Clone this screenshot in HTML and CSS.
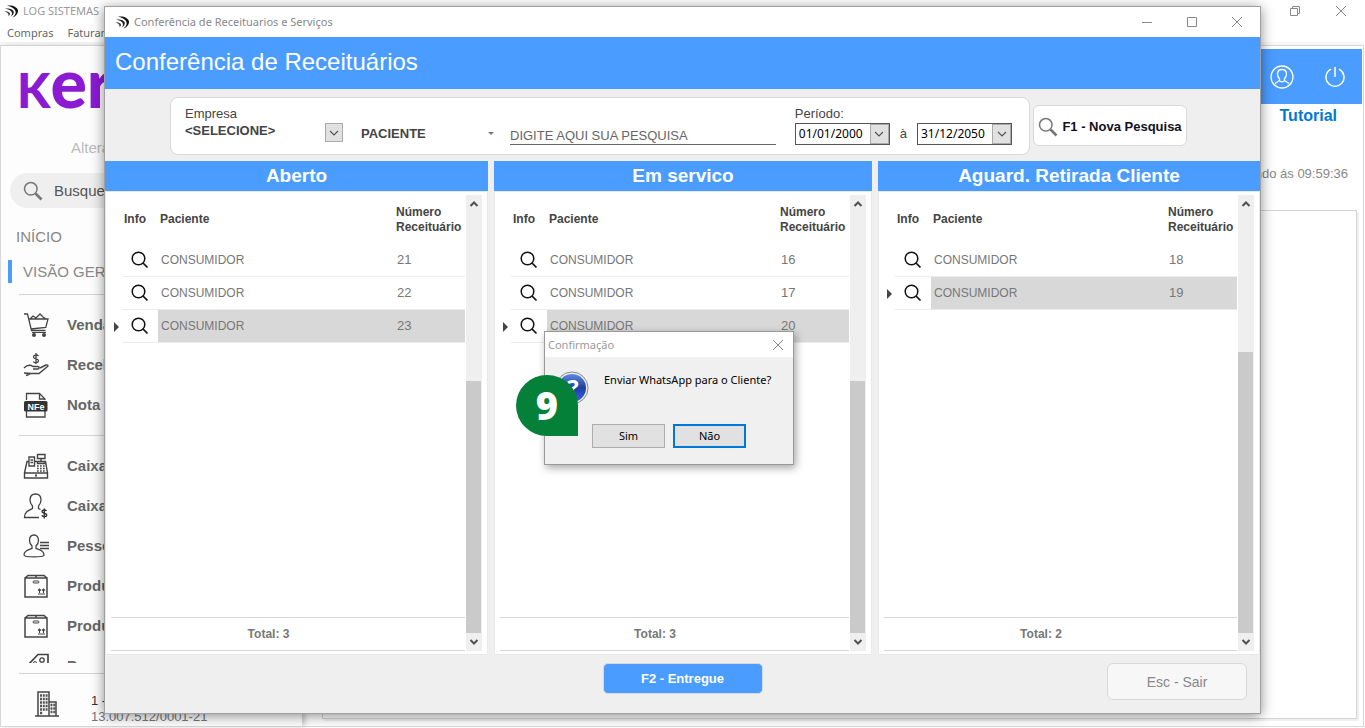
FILE: index.html
```html
<!DOCTYPE html>
<html lang="pt-BR">
<head>
<meta charset="utf-8">
<title>Conferência de Receituarios e Serviços</title>
<link rel="stylesheet" href="styles.css">
</head>
<body>
<svg class="defs" aria-hidden="true">
  <symbol id="app-mark" viewBox="0 0 15 13">
    <path d="M3 .8C8-.3 13.500 2 14 5.500c.2 3-2 5.500-5.500 7 2.500-2.200 3.600-4.200 3-6.200C10.700 3.500 7 1.300 3 .8z" fill="#111"/>
    <path d="M1 3.500C6 3 9.500 4.500 9.800 7c.1 1.800-1 3.300-3 4.500 1-1.500 1.400-2.600 1.100-3.800C7.400 5.600 4.500 4.200 1 3.500z" fill="#222"/>
    <path d="M.5 6.300c2.500 0 5 .6 5.500 2.300.2.9-.3 1.800-1.500 2.500.3-2-.9-3.800-4-4.800z" fill="#444"/>
  </symbol>
  <symbol id="lens" viewBox="0 0 18 18">
    <circle cx="7.500" cy="7.500" r="6.300" fill="none" stroke="#111" stroke-width="1.500"/>
    <path d="M12 12l4.500 4.500" stroke="#111" stroke-width="1.700"/>
  </symbol>
  <symbol id="search" viewBox="0 0 20 20">
    <circle cx="7.800" cy="7.800" r="6.300" fill="none" stroke="#777" stroke-width="1.500"/>
    <path d="M12.500 12.500l6 6" stroke="#777" stroke-width="2.600"/>
  </symbol>
  <symbol id="cross" viewBox="0 0 12 12">
    <path d="M1 1l10 10M11 1L1 11" stroke="#888" fill="none"/>
  </symbol>
  <symbol id="chevron" viewBox="0 0 10 10">
    <path d="M1 3l4 4 4-4" stroke="#555" fill="none" stroke-width="1.200"/>
  </symbol>
  <symbol id="scroll-up" viewBox="0 0 10 10">
    <path d="M1.500 7L5 3.500 8.500 7" stroke="#505050" fill="none" stroke-width="2"/>
  </symbol>
  <symbol id="scroll-down" viewBox="0 0 10 10">
    <path d="M1.500 3L5 6.500 8.500 3" stroke="#505050" fill="none" stroke-width="2"/>
  </symbol>
  <symbol id="box" viewBox="0 0 26 26">
    <path d="M2 5h22v19H2zM2 5l3-2.500h16L24 5M13 2.500V5" fill="none" stroke="#444" stroke-width="1.500"/>
    <rect x="10" y="8" width="6" height="2" rx="1" fill="none" stroke="#444"/>
    <path d="M15 21h7M16.500 20v-4M20.500 20v-4M15 17.500l1.500-1.500 1.500 1.500M19 17.500l1.500-1.500 1.500 1.500" fill="none" stroke="#444" stroke-width="1.100"/>
  </symbol>
</svg>

<div class="app">
  <header class="app-title">
    <svg class="mark"><use href="#app-mark"/></svg>
    <span>LOG SISTEMAS</span>
    <span class="app-controls">
      <button class="plain" aria-label="Restaurar"><svg width="12" height="12" viewBox="0 0 12 12"><path d="M1.500 3.500h7v7h-7zM3.500 3.500v-2h7v7h-2" fill="none" stroke="#888"/></svg></button>
      <button class="plain" aria-label="Fechar"><svg width="12" height="12"><use href="#cross"/></svg></button>
    </span>
  </header>
  <nav class="app-menu"><span>Compras</span><span>Faturamento</span></nav>
  <div class="app-body">
    <aside class="sidebar">
      <div class="logo"><span class="logo-k">K</span>er</div>
      <div class="change">Alterar</div>
      <div class="side-search"><svg width="20" height="20"><use href="#search"/></svg><span>Busque</span></div>
      <div class="side-head">INÍCIO</div>
      <div class="side-current">VISÃO GERAL</div>
      <ul class="side-list">
        <li><svg viewBox="0 0 26 26"><path d="M1 2h3.500l4 16.500h14M5.500 7H25l-2.200 8.500-15 1.500M7 7l3-3 3 2 4-4 3 3 3 2" fill="none" stroke="#444" stroke-width="1.300"/><circle cx="11" cy="23" r="2" fill="#444"/><circle cx="21" cy="23" r="2" fill="#444"/><path d="M9 20.500h14" stroke="#444"/></svg>Vendas</li>
        <li><svg viewBox="0 0 26 26"><path d="M1 16c3-3 6-3.500 9-1.500h5c1.500 0 1.500 2.500 0 2.500h-5M17 16l6-3c1.500-.5 2.500.5 1.500 1.500L16 21.500H8l-7-.500M3 23.500l4-1.500" fill="none" stroke="#444" stroke-width="1.400"/><path d="M15.500 4C14 2.400 10.500 2.800 10.500 5c0 2.600 5 1.200 5 3.800 0 2.200-3.800 2.600-5.300.8M13 1v11" fill="none" stroke="#444" stroke-width="1.300"/></svg>Receber</li>
        <li><svg viewBox="0 0 26 26"><path d="M3.500 8V1.500h13L22 7v1M16.500 1.500V7H22M3.500 19v6H22v-6" fill="none" stroke="#444" stroke-width="1.300"/><rect x="1" y="9" width="23.500" height="10.500" rx="1.500" fill="#333"/><text x="13" y="17.500" class="nfe">NFe</text></svg>Nota</li>
      </ul>
      <ul class="side-list side-list-more">
        <li><svg viewBox="0 0 26 26"><path d="M1.500 20L4 8.500h2M11.500 8.500h3M21 8.500h1.500L24.500 20M1.500 20h23v5h-23zM6 13V4h5.500v9zM7.500 7h2.500M7.500 9.500h2.500M14.500 1.500H22v4h-7.500zM18 5.500v3M14.500 8.500H22v2h-7.500z" fill="none" stroke="#444" stroke-width="1.400"/><path d="M14 13h8M14 15.500h8M14 18h8" stroke="#444" stroke-width="1.500" stroke-dasharray="1.700 1.300"/><path d="M12 22.500h2" stroke="#444" stroke-width="2"/></svg>Caixa</li>
        <li><svg viewBox="0 0 26 26"><path d="M12.500 1C9 1 7 3.500 7 7c0 2.500 1 4.500 2.500 6v2.500C5 17.500 1.500 19 1.500 24.500H16M12.500 1C16 1 18 3.500 18 7c0 2.500-1 4.500-2.500 6v2.500l2 1" fill="none" stroke="#444" stroke-width="1.300"/><path d="M23.500 18c-1-1.600-4.500-1.300-4.500.6 0 2.200 4.800 1 4.800 3.400 0 2-3.800 2.200-5 .4M21.300 15.500V25.500" fill="none" stroke="#333" stroke-width="1.400"/></svg>Caixa</li>
        <li><svg viewBox="0 0 26 26"><path d="M11 2C8 2 6.500 4.500 6.500 7.500c0 2.500 1 4 2.500 5.500v2.500C4.500 17 1 18 1 22c0 2.500 20 2.500 20 0 0-4-3.500-5-8-6.500V13c1.500-1.500 2.500-3 2.500-5.500C15.500 4.500 14 2 11 2z" fill="none" stroke="#444" stroke-width="1.300"/><path d="M17 9.500h9M17 12.500h9M17 15.500h9" stroke="#444" stroke-width="1.400"/></svg>Pessoas</li>
        <li><svg><use href="#box"/></svg>Produtos</li>
        <li><svg><use href="#box"/></svg>Produtos</li>
        <li><svg viewBox="0 0 26 26"><path d="M4 13L15 1.500h10V13L14 25z" fill="none" stroke="#444" stroke-width="1.700"/><circle cx="19" cy="7" r="2.200" fill="none" stroke="#444" stroke-width="1.300"/><circle cx="12" cy="10" r="1.500" fill="none" stroke="#444"/></svg>Promoções</li>
      </ul>
      <div class="company">
        <svg viewBox="0 0 26 26"><path d="M1 25h24M4 25V1h11v24M15 11h7v14" fill="none" stroke="#444" stroke-width="1.500"/><path d="M6 4.500h8M6 8h8M6 11.500h8M6 15h8M6 18.500h8M6 22h3M16.500 14h5M16.500 17.500h5M16.500 21h5" stroke="#555" stroke-width="2.500" stroke-dasharray="2 .8"/></svg>
        <div><span class="company-name">1 - LOG</span><span>13.007.512/0001-21</span></div>
      </div>
    </aside>
    <main class="app-main">
      <div class="top-bar">
        <svg width="24" height="24" viewBox="0 0 24 24"><g fill="none" stroke="#fff" stroke-width="1.300"><circle cx="12" cy="12" r="11"/><path d="M12 4.500c-3 0-4.500 2-4.500 4.500 0 2 .8 3.500 2 4.800v1.700L5 18.500M12 4.500c3 0 4.500 2 4.500 4.500 0 2-.8 3.500-2 4.800v1.700l4.500 3M9.500 15.500c1 1.700 4 1.700 5 0"/></g></svg>
        <svg width="20" height="20" viewBox="0 0 20 20"><path d="M6 2.200a9 9 0 1 0 8 0M10 0v10" fill="none" stroke="#fff" stroke-width="1.500"/></svg>
      </div>
      <a class="tutorial" href="#">Tutorial</a>
      <div class="updated">Atualizando ás 09:59:36</div>
      <div class="board"></div>
    </main>
  </div>
</div>

<section class="window" aria-label="Conferência de Receituários">
  <header class="window-title">
    <svg class="mark"><use href="#app-mark"/></svg>
    <span>Conferência de Receituarios e Serviços</span>
    <span class="window-controls">
      <button class="plain" aria-label="Minimizar"><svg width="12" height="12"><path d="M1 6.500h10" stroke="#888"/></svg></button>
      <button class="plain" aria-label="Maximizar"><svg width="12" height="12"><path d="M1.500 1.500h9v9h-9z" fill="none" stroke="#888"/></svg></button>
      <button class="plain" aria-label="Fechar"><svg width="12" height="12"><use href="#cross"/></svg></button>
    </span>
  </header>
  <h1 class="banner">Conferência de Receituários</h1>

  <form class="filters">
    <div class="filter-card">
      <div class="company-field">
        <label for="empresa">Empresa</label>
        <div class="company-pick">
          <select id="empresa"><option>&lt;SELECIONE&gt;</option></select>
          <span class="drop"><svg width="10" height="10"><use href="#chevron"/></svg></span>
        </div>
      </div>
      <div class="kind-pick">
        <select aria-label="Pesquisar por"><option>PACIENTE</option></select>
        <svg width="6" height="4"><path d="M0 0h6L3 3z" fill="#777"/></svg>
      </div>
      <input class="query" type="text" aria-label="Pesquisa" placeholder="DIGITE AQUI SUA PESQUISA">
      <div class="period">
        <label for="inicio">Período:</label>
        <div class="dates">
          <div class="date"><input id="inicio" type="text" value="01/01/2000"><button type="button" aria-label="Abrir calendário inicial"><svg width="10" height="10"><use href="#chevron"/></svg></button></div>
          <label for="fim">à</label>
          <div class="date"><input id="fim" type="text" value="31/12/2050"><button type="button" aria-label="Abrir calendário final"><svg width="10" height="10"><use href="#chevron"/></svg></button></div>
        </div>
      </div>
    </div>
    <button class="new-search" type="button"><svg width="20" height="20"><use href="#search"/></svg>F1 - Nova Pesquisa</button>
  </form>

  <div class="columns">
    <section class="column">
      <h2>Aberto</h2>
      <div class="panel">
        <div class="list">
          <table>
            <colgroup><col class="c-mark"><col class="c-info"><col><col class="c-num"></colgroup>
            <thead><tr><td></td><th>Info</th><th>Paciente</th><th>Número Receituário</th></tr></thead>
            <tbody>
              <tr><td></td><td><svg class="lens"><use href="#lens"/></svg></td><td>CONSUMIDOR</td><td>21</td></tr>
              <tr><td></td><td><svg class="lens"><use href="#lens"/></svg></td><td>CONSUMIDOR</td><td>22</td></tr>
              <tr class="selected"><td></td><td><svg class="lens"><use href="#lens"/></svg></td><td>CONSUMIDOR</td><td>23</td></tr>
            </tbody>
          </table>
          <div class="total">Total: 3</div>
        </div>
        <div class="scroll"><svg width="10" height="10"><use href="#scroll-up"/></svg><div class="track"><div class="thumb"></div></div><svg width="10" height="10"><use href="#scroll-down"/></svg></div>
      </div>
    </section>
    <section class="column">
      <h2>Em servico</h2>
      <div class="panel">
        <div class="list">
          <table>
            <colgroup><col class="c-mark"><col class="c-info"><col><col class="c-num"></colgroup>
            <thead><tr><td></td><th>Info</th><th>Paciente</th><th>Número Receituário</th></tr></thead>
            <tbody>
              <tr><td></td><td><svg class="lens"><use href="#lens"/></svg></td><td>CONSUMIDOR</td><td>16</td></tr>
              <tr><td></td><td><svg class="lens"><use href="#lens"/></svg></td><td>CONSUMIDOR</td><td>17</td></tr>
              <tr class="selected"><td></td><td><svg class="lens"><use href="#lens"/></svg></td><td>CONSUMIDOR</td><td>20</td></tr>
            </tbody>
          </table>
          <div class="total">Total: 3</div>
        </div>
        <div class="scroll"><svg width="10" height="10"><use href="#scroll-up"/></svg><div class="track"><div class="thumb"></div></div><svg width="10" height="10"><use href="#scroll-down"/></svg></div>
      </div>
    </section>
    <section class="column">
      <h2>Aguard. Retirada Cliente</h2>
      <div class="panel">
        <div class="list">
          <table>
            <colgroup><col class="c-mark"><col class="c-info"><col><col class="c-num"></colgroup>
            <thead><tr><td></td><th>Info</th><th>Paciente</th><th>Número Receituário</th></tr></thead>
            <tbody>
              <tr><td></td><td><svg class="lens"><use href="#lens"/></svg></td><td>CONSUMIDOR</td><td>18</td></tr>
              <tr class="selected"><td></td><td><svg class="lens"><use href="#lens"/></svg></td><td>CONSUMIDOR</td><td>19</td></tr>
            </tbody>
          </table>
          <div class="total">Total: 2</div>
        </div>
        <div class="scroll"><svg width="10" height="10"><use href="#scroll-up"/></svg><div class="track"><div class="thumb thumb-long"></div></div><svg width="10" height="10"><use href="#scroll-down"/></svg></div>
      </div>
    </section>
  </div>

  <footer class="actions">
    <button class="deliver" type="button">F2 - Entregue</button>
    <button class="leave" type="button">Esc - Sair</button>
  </footer>
</section>

<div class="dialog" role="dialog" aria-labelledby="dialog-title">
  <header class="dialog-title"><span id="dialog-title">Confirmação</span><button class="plain" aria-label="Fechar"><svg width="12" height="12"><use href="#cross"/></svg></button></header>
  <div class="dialog-body">
    <svg class="ask" viewBox="0 0 34 34">
      <defs><linearGradient id="blue" x1="0" y1="0" x2="0" y2="1"><stop offset="0" stop-color="#5f8be0"/><stop offset=".5" stop-color="#1c3f9f"/><stop offset="1" stop-color="#3f63e6"/></linearGradient></defs>
      <circle cx="17" cy="17" r="16" fill="#eee" stroke="#888"/>
      <circle cx="17" cy="17" r="14" fill="url(#blue)"/>
      <text x="18" y="26">?</text>
    </svg>
    <p>Enviar WhatsApp para o Cliente?</p>
  </div>
  <div class="dialog-buttons"><button type="button">Sim</button><button type="button" class="default">Não</button></div>
  <div class="step">9</div>
</div>
</body>
</html>
```

FILE: styles.css
```css
* { box-sizing: border-box; }
html, body { height: 100%; }
body {
  margin: 0;
  position: relative;
  overflow: hidden;
  background: #fff;
  color: #444;
  font: 13px/16px "Liberation Sans", Arial, sans-serif;
}
button, input, select { font: inherit; color: inherit; margin: 0; }
select, input { appearance: none; border: 0; padding: 0; background: transparent; border-radius: 0; outline: 0; }
h1, h2, p, ul { margin: 0; padding: 0; }
svg { display: block; flex: none; }
.defs { position: absolute; width: 0; height: 0; }
.plain { border: 0; padding: 0; background: none; }
.mark { width: 15px; height: 13px; }

/* application behind the window */
.app { height: 100%; display: flex; flex-direction: column; }
.app-title { height: 24px; display: flex; align-items: center; padding: 0 18px 2px 4px; gap: 4px; font: 11px/16px "Noto Sans", sans-serif; color: #999; white-space: nowrap; }
.app-controls { margin-left: auto; display: flex; gap: 34px; }
.app-menu { height: 18px; display: flex; gap: 14px; padding-left: 7px; font: 11px/18px "Noto Sans", sans-serif; color: #666; }
.app-body { flex: 1; min-height: 0; display: flex; margin: 3px 1px 1px 0; border: 1px solid #d8d8d8; box-shadow: 0 -3px 0 #f7f7f7; }
.sidebar { position: relative; z-index: 1; width: 301px; flex: none; display: flex; flex-direction: column; background: #fdfdfd; box-shadow: 3px 0 5px #ccc; white-space: nowrap; }
.logo { height: 94px; padding-left: 16px; font: 900 68px/72px Lato, sans-serif; color: #8a1bd3; }
.logo-k { font-size: 48px; }
.change { padding-left: 70px; font-size: 15px; line-height: 16px; color: #bbb; }
.side-search { height: 35px; margin: 17px 8px 0 9px; display: flex; align-items: center; gap: 11px; padding-left: 13px; border-radius: 18px; background: #efefef; font-size: 15px; color: #555; }
.side-head { margin: 20px 0 0 15px; font-size: 15px; line-height: 18px; color: #888; }
.side-current { margin: 14px 0 0 7px; padding-left: 11px; border-left: 4px solid #4a9cff; font-size: 15px; line-height: 23px; color: #888; }
.side-list { list-style: none; margin: 11px 8px 0 18px; padding-top: 10px; border-top: 1px solid #d4d4d4; }
.side-list li { height: 40px; display: flex; align-items: center; gap: 18px; padding-left: 4px; font-size: 15px; font-weight: bold; color: #666; }
.side-list svg { width: 26px; height: 26px; }
.side-list-more { margin-top: 10px; height: 228px; overflow: hidden; flex: none; }
.nfe { font: bold 9px "Liberation Sans", sans-serif; fill: #fff; text-anchor: middle; }
.company { margin: 10px 8px 0 18px; padding: 17px 0 0 15px; display: flex; gap: 31px; border-top: 1px solid #d4d4d4; color: #777; }
.company svg { width: 26px; height: 26px; }
.company div { display: flex; flex-direction: column; padding-top: 2px; }
.company-name { color: #333; }
.app-main { flex: 1; display: flex; flex-direction: column; padding: 3px 1px 7px 20px; background: #fff; }
.top-bar { height: 55px; margin-left: -20px; display: flex; align-items: center; justify-content: flex-end; gap: 31px; padding-right: 17px; background: #4a9cff; }
.tutorial { align-self: flex-end; margin: 2px 25px 0 0; font-size: 16px; line-height: 20px; font-weight: bold; color: #0078d7; text-decoration: none; }
.updated { align-self: flex-end; margin: 40px 14px 0 0; font-size: 13px; line-height: 16px; color: #888; }
.board { flex: 1; margin: 28px 5px 0 0; border: 1px solid #d4d4d4; box-shadow: 2px 2px 0 #f0f0f0; }

/* main window */
.window { position: absolute; z-index: 2; inset: 6px 104px 14px; display: flex; flex-direction: column; border: 1px solid #a0a0a0; background: #efefef; box-shadow: 0 2px 12px rgba(0, 0, 0, .45); }
.window-title { height: 30px; flex: none; display: flex; align-items: center; gap: 4px; padding: 0 17px 0 10px; background: #fff; font: 11px/16px "Noto Sans", sans-serif; color: #888; }
.window-controls { margin-left: auto; display: flex; gap: 33px; }
.banner { height: 52px; flex: none; padding-left: 10px; background: #4a9cff; color: #fff; font-size: 24px; line-height: 50px; font-weight: normal; }
.filters { height: 72px; flex: none; display: flex; align-items: flex-start; gap: 3px; padding: 8px 73px 0 65px; }
.filter-card { flex: 1; height: 58px; display: flex; align-items: flex-start; padding: 8px 17px 0 14px; border: 1px solid #d9d9d9; border-radius: 8px; background: #fff; }
.filter-card label { line-height: 16px; display: block; }
.company-field { width: 158px; }
.company-pick { display: flex; align-items: flex-end; }
.company-pick select { flex: 1; height: 20px; padding-bottom: 2px; font-weight: bold; }
.drop { width: 18px; height: 19px; display: grid; place-items: center; border: 1px solid #aaa; background: #e1e1e1; }
.kind-pick { width: 133px; margin: 18px 16px 0 18px; display: flex; align-items: center; }
.kind-pick select { flex: 1; height: 20px; font-weight: bold; }
.query { flex: 1; min-width: 0; height: 18px; margin-top: 21px; border-bottom: 1px solid #666; line-height: 16px; }
.query::placeholder { color: #666; opacity: 1; }
.period { margin-left: 19px; }
.dates { display: flex; align-items: center; gap: 10px; margin-top: 1px; }
.date { width: 95px; height: 22px; display: flex; border: 1px solid #555; background: #fff; }
.date input { width: 74px; padding-left: 3px; font: 12px/18px "Noto Sans", sans-serif; color: #000; }
.date button { width: 19px; padding: 0; display: grid; place-items: center; border: 1px solid #aaa; background: #e1e1e1; }
.new-search { width: 154px; height: 41px; margin-top: 8px; padding: 3px 0 0; display: flex; align-items: center; justify-content: center; gap: 4px; border: 1px solid #d9d9d9; border-radius: 6px; background: #fff; color: #112; font-weight: bold; white-space: nowrap; }

.columns { flex: 1; min-height: 0; display: grid; grid-template-columns: 383fr 378fr 382fr; gap: 6px; }
.column { display: flex; flex-direction: column; min-width: 0; }
.column h2 { height: 30px; background: #4a9cff; color: #fff; font-size: 19px; line-height: 30px; text-align: center; }
.panel { flex: 1; display: flex; gap: 1px; padding: 3px 5px 3px 5px; border: 1px solid #e8e8e8; background: #fff; }
.list { flex: 1; min-width: 0; display: flex; flex-direction: column; }
table { width: 100%; table-layout: fixed; border-collapse: separate; border-spacing: 0; }
.c-mark { width: 11px; }
.c-info { width: 36px; }
.c-num { width: 71px; }
th, td { padding: 0 0 0 2px; text-align: left; vertical-align: middle; }
thead tr { height: 49px; }
th { font-size: 12px; line-height: 15px; color: #444; }
tbody td { height: 33px; padding-left: 3px; border-bottom: 1px solid #ececec; color: #777; }
tbody td:first-child { border: 0; padding: 0; }
tbody td:nth-child(2) { padding-left: 9px; }
tbody td:nth-child(3) { font-size: 12px; }
.lens { width: 18px; height: 18px; }
.selected td:nth-child(n+3) { background: #d8d8d8; }
.selected td:first-child::before { content: ""; display: block; width: 0; margin-left: 3px; border: 5px solid transparent; border-left-color: #444; border-right: 0; }
.total { margin-top: auto; height: 34px; padding-right: 39px; border: solid #d6d6d6; border-width: 1px 0; font-size: 12px; line-height: 32px; font-weight: bold; text-align: center; color: #777; }
.scroll { width: 16px; display: flex; flex-direction: column; align-items: center; gap: 4px; padding: 4px 0; background: #efefef; }
.track { flex: 1; align-self: stretch; display: flex; flex-direction: column; justify-content: flex-end; }
.thumb { height: 60%; margin: 0 1px 0 0; background: #cacaca; }
.thumb-long { height: 67%; }

.actions { height: 58px; flex: none; display: grid; grid-template-columns: 1fr auto 1fr; align-items: start; padding: 8px 13px 0; }
.actions button { height: 37px; border: 1px solid #d9d9d9; border-radius: 6px; font-size: 14px; }
.actions .deliver { grid-column: 2; width: 160px; height: 31px; border-radius: 5px; background: #4a9cff; color: #fff; font-size: 13px; font-weight: bold; }
.actions .leave { justify-self: end; width: 140px; background: #f7f7f7; color: #888; }

/* confirmation dialog */
.dialog { position: absolute; z-index: 3; left: 544px; top: 331px; width: 250px; display: flex; flex-direction: column; border: 1px solid #999; background: #f0f0f0; box-shadow: 2px 3px 8px rgba(0, 0, 0, .35); color: #000; font: 11px/16px "Noto Sans", sans-serif; }
.dialog-title { height: 25px; display: flex; align-items: center; justify-content: space-between; padding: 0 9px 0 3px; background: #fff; color: #999; }
.dialog-body { display: flex; gap: 15px; padding: 14px 0 0 10px; white-space: nowrap; }
.dialog-body p { padding-top: 1px; }
.ask { width: 34px; height: 34px; }
.ask text { font: bold 24px "Open Sans", sans-serif; fill: #fff; text-anchor: middle; }
.dialog-buttons { display: flex; gap: 8px; padding: 19px 0 16px 47px; }
.dialog-buttons button { width: 73px; height: 24px; padding: 0; border: 1px solid #adadad; background: #e1e1e1; }
.dialog-buttons .default { border: 2px solid #0078d7; }
.step { position: absolute; left: -29px; top: 43px; width: 62px; height: 61px; border-radius: 50% 50% 0 50%; background: #048039; color: #fff; font: 800 38px/61px "Open Sans", sans-serif; text-align: center; }
```
